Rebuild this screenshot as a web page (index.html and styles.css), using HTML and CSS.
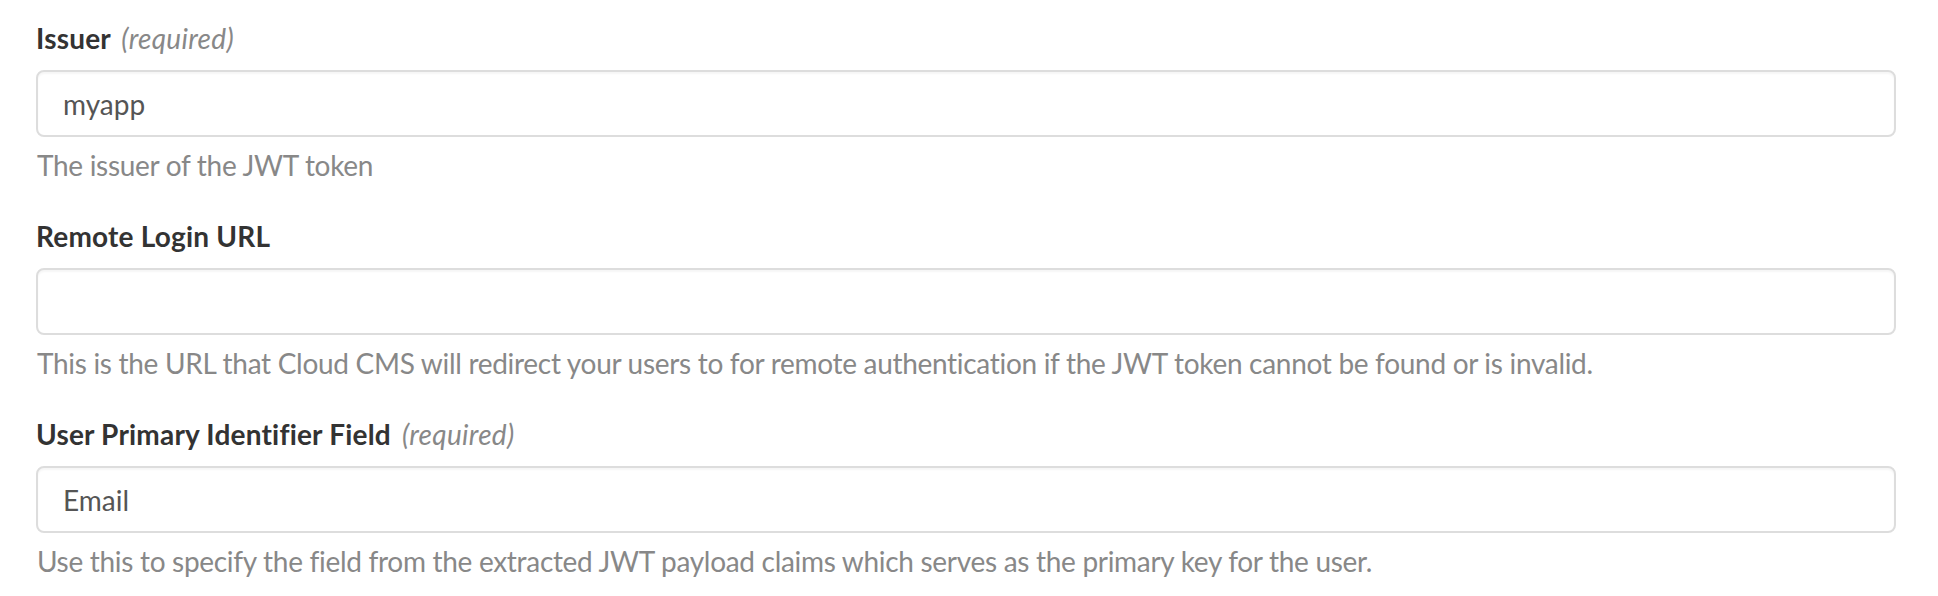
FILE: index.html
```html
<!DOCTYPE html>
<html lang="en">
<head>
  <meta charset="UTF-8">
  <title>JWT Settings</title>
  <link rel="stylesheet" href="styles.css">
</head>
<body>
  <form class="settings-form">

    <div class="form-group">
      <label for="issuer">Issuer <span class="required">(required)</span></label>
      <input type="text" id="issuer" class="form-control" value="myapp">
      <p class="help-block">The issuer of the JWT token</p>
    </div>

    <div class="form-group">
      <label for="loginUrl">Remote Login URL</label>
      <input type="text" id="loginUrl" class="form-control" value="">
      <p class="help-block">This is the URL that Cloud CMS will redirect your users to for remote authentication if the JWT token cannot be found or is invalid.</p>
    </div>

    <div class="form-group">
      <label for="identifier">User Primary Identifier Field <span class="required">(required)</span></label>
      <input type="text" id="identifier" class="form-control" value="Email">
      <p class="help-block">Use this to specify the field from the extracted JWT payload claims which serves as the primary key for the user.</p>
    </div>

  </form>
</body>
</html>
```

FILE: styles.css
```css
body {
  font-family: Lato, "Open Sans", sans-serif;
  font-size: 28px;
  line-height: 40px;
  font-variant-ligatures: none;
  color: #333;
  background-color: #fff;
  margin: 0;
  padding: 18px 42px 0 36px;
}

.form-group {
  margin-bottom: 31px;
}

.form-group label {
  display: block;
  font-weight: bold;
  letter-spacing: 0.2px;
  margin-bottom: 12px;
}

.required {
  font-weight: normal;
  font-style: italic;
  letter-spacing: 0.3px;
  color: #888;
  margin-left: 4px;
}

.form-control {
  display: block;
  width: 100%;
  height: 67px;
  padding: 12px 25px;
  font-family: inherit;
  font-size: 28px;
  color: #555;
  background-color: #fff;
  border: 2px solid #ddd;
  border-radius: 8px;
  box-shadow: inset 0 2px 2px rgba(0, 0, 0, 0.04);
  box-sizing: border-box;
  outline: none;
}

.help-block {
  margin: 8px 0 0 1px;
  letter-spacing: -0.3px;
  color: #888;
}
```
